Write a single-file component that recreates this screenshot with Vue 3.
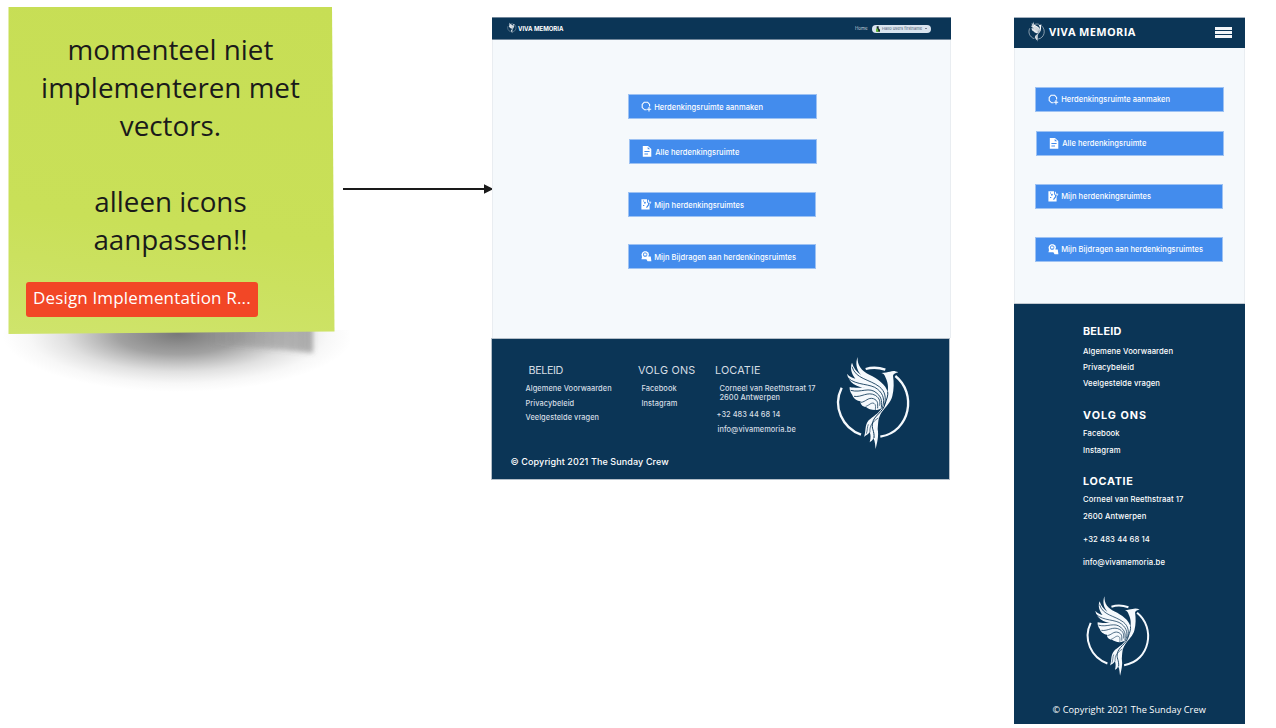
<script setup>
import { h } from 'vue'

const actions = [
  { icon: 'add', label: 'Herdenkingsruimte aanmaken' },
  { icon: 'file', label: 'Alle herdenkingsruimte' },
  { icon: 'edit', label: 'Mijn herdenkingsruimtes' },
  { icon: 'chat', label: 'Mijn Bijdragen aan herdenkingsruimtes' },
]

const policy = ['Algemene Voorwaarden', 'Privacybeleid', 'Veelgestelde vragen']
const social = ['Facebook', 'Instagram']
const place = ['Corneel van Reethstraat 17', '2600 Antwerpen', '+32 483 44 68 14', 'info@vivamemoria.be']

const line = (d, w = 1) => h('path', { d, fill: 'none', stroke: 'currentColor', 'stroke-width': w })
const solid = (d) => h('path', { d, fill: 'currentColor', 'fill-rule': 'evenodd' })
const groove = (d, w = 3) => h('path', { d, fill: 'none', stroke: '#0b3556', 'stroke-width': w })

const glyphs = {
  add: () => [line('M5.6 8.8H3.6L1.2 6.6V3.4L3.2 1.2H6.6L8.6 3.4V5.4', 1.1), line('M8 6V10.4M5.8 8.2H10.2', 1.1)],
  file: () => [solid('M.8 0H6L9.3 3V10.8H.8ZM2.4 4.9V5.9H7.6V4.9ZM2.4 7.5V8.5H6V7.5ZM5.7 .9V3.3H8.2Z')],
  edit: () => [
    solid('M.4 .3H6V3.2L7 4.2V5.4L5.2 8 5.4 8.9 6.4 8.6 8.6 5.4V10.4H.4ZM2 1.5V2.6H3V1.5ZM4 2.4L2.8 3.8 3.9 4.9 5 3.8ZM2 6V7H3.3V6Z'),
    line('M7.4 .8V3.2H10.2M9.7 4L8.2 5.4', 1),
  ],
  chat: () => [
    solid('M1.5 1.3L3.2 .2H5.4L7.4 1.5 8 3.6 7.3 5.4H9.8L10.4 10.2H6.6L5.4 8.3H.4L1 6.3 .5 3.3ZM2.2 2.5V4.7L3.2 5.7H5.3L6.3 4.2V2.6L5 1.5H3.2ZM3 2.5H5.5V4.6H3Z'),
    solid('M3.8 3.1H4.7V4H3.8Z'),
  ],
}

const Icon = (props) => h('svg', { viewBox: '0 0 10.6 10.6' }, glyphs[props.name]())
Icon.props = ['name']

const Phoenix = () =>
  h('svg', { viewBox: '0 0 300 330' }, [
    line('M50 128C22 185 52 249 108 269', 7),
    line('M211 93C276 144 257 260 166 275', 7),
    line('M122 72C142 66 164 68 181 74', 7),
    solid('M98 36C96 61 110 78 133 89C158 101 183 119 188 141C192 117 184 104 181 96C179 89 175 86 169 84C180 83 188 81 195 80C204 76 212 78 220 82C212 84 206 86 204 92C207 111 207 133 202 153C197 174 181 186 170 202C158 220 160 236 158 252C162 274 156 294 152 312C150 302 151 289 145 279C143 287 138 289 134 292C138 278 137 268 134 261C128 271 121 271 117 276C124 260 118 241 131 226C144 213 160 207 171 188C158 200 133 195 123 186C111 186 105 175 107 169C93 167 84 158 82 150C76 143 73 133 74 126C89 130 109 127 123 129C95 127 70 112 66 86C73 95 82 98 91 101C80 86 74 69 81 53C85 68 94 79 108 90C95 75 90 55 98 36Z'),
    groove('M81 65C92 102 132 102 163 125C181 139 184 159 178 180', 2.6),
    groove('M69 99C94 122 137 115 157 132C177 148 180 168 171 191', 2.6),
    groove('M77 136C108 145 133 123 156 145C173 159 170 175 169 188', 2.6),
    groove('M87 154C110 158 127 138 151 151C165 160 166 171 164 182', 2.5),
    groove('M108 172C122 171 129 156 145 161C160 167 158 175 158 190', 2.5),
    groove('M122 184C132 182 138 171 147 175C154 179 151 188 151 195', 2),
    groove('M188 140C190 150 186 160 180 177C175 201 145 213 143 234C138 250 149 257 147 279', 3),
    groove('M160 219C141 231 133 243 135 262M130 238C126 247 128 255 124 266', 2),
  ])
</script>

<template>
  <main class="board">
    <section class="note">
      <svg class="shade" viewBox="0 0 350 70">
        <defs>
          <filter id="crisp" x="-20%" y="-100%" width="140%" height="300%"><feGaussianBlur stdDeviation="2.500" /></filter>
          <radialGradient id="pool">
            <stop offset="0" stop-color="#444" stop-opacity=".72" />
            <stop offset=".35" stop-color="#444" stop-opacity=".5" />
            <stop offset=".65" stop-color="#555" stop-opacity=".18" />
            <stop offset=".85" stop-color="#666" stop-opacity=".05" />
            <stop offset="1" stop-color="#666" stop-opacity="0" />
          </radialGradient>
          <linearGradient id="edge">
            <stop offset="0" stop-color="#555" stop-opacity="0" />
            <stop offset="1" stop-color="#555" stop-opacity=".45" />
          </linearGradient>
        </defs>
        <ellipse cx="178" cy="4" rx="176" ry="58" fill="url(#pool)" />
        <path d="M210 -6H313V23Q260 17 210 15Z" fill="url(#edge)" filter="url(#crisp)" />
      </svg>
      <div class="paper">
        <p>momenteel niet<br />implementeren met<br />vectors.<br /><br />alleen icons<br />aanpassen!!</p>
        <span class="tag">Design Implementation R...</span>
      </div>
    </section>

    <svg class="arrow" viewBox="0 0 152 12">
      <path d="M0 6H143" stroke="#1a1a1a" stroke-width="2.2" />
      <path d="M141 1.2L150.500 6L141 10.800Z" fill="#1a1a1a" />
    </svg>

    <section class="desktop">
      <header>
        <Phoenix class="mark" />
        <b>VIVA MEMORIA</b>
        <span class="home">Home</span>
        <span class="user">
          <svg viewBox="0 0 6 8"><path d="M1 0H4V3L6 5V8H1Z" fill="#172b2b" /><path d="M0 4L2 3 4 8H0Z" fill="#65bd36" /></svg>
          <span>Hallo users firstname</span><i></i>
        </span>
      </header>
      <nav class="actions">
        <a v-for="a in actions" :key="a.icon" :class="a.icon"><Icon :name="a.icon" /><span>{{ a.label }}</span></a>
      </nav>
      <footer>
        <div class="cols">
          <div class="policy"><h2>BELEID</h2><p v-for="t in policy" :key="t">{{ t }}</p></div>
          <div class="social"><h2>VOLG ONS</h2><p v-for="t in social" :key="t">{{ t }}</p></div>
          <div class="place"><h2>LOCATIE</h2><p v-for="t in place" :key="t">{{ t }}</p></div>
          <Phoenix class="bird" />
        </div>
        <small>© Copyright 2021 The Sunday Crew</small>
      </footer>
    </section>

    <section class="mobile">
      <header>
        <Phoenix class="mark" />
        <b>VIVA MEMORIA</b>
        <span class="burger"><i></i><i></i><i></i></span>
      </header>
      <nav class="actions">
        <a v-for="a in actions" :key="a.icon" :class="a.icon"><Icon :name="a.icon" /><span>{{ a.label }}</span></a>
      </nav>
      <footer>
        <div class="policy"><h2>BELEID</h2><p v-for="t in policy" :key="t">{{ t }}</p></div>
        <div class="social"><h2>VOLG ONS</h2><p v-for="t in social" :key="t">{{ t }}</p></div>
        <div class="place"><h2>LOCATIE</h2><p v-for="t in place" :key="t">{{ t }}</p></div>
        <Phoenix class="bird" />
        <small>© Copyright 2021 The Sunday Crew</small>
      </footer>
    </section>
  </main>
</template>

<style>
body { margin: 0; background: #fff; overflow: hidden; }
</style>

<style scoped>
.board { position: relative; width: 1276px; height: 728px; overflow: hidden; background: #fff; font-family: Inter, "Liberation Sans", sans-serif; }
.board * { box-sizing: border-box; }
p, h2 { margin: 0; white-space: nowrap; }
svg { display: block; flex: none; overflow: visible; }

.note { position: absolute; left: 8px; top: 7px; width: 327px; height: 328px; }
.shade { position: absolute; left: -8px; top: 323px; width: 350px; height: 70px; overflow: hidden; }
.paper { position: relative; height: 328px; padding: 23px 2px 0 0; background: linear-gradient(187deg, #c7de55 0%, #c9e058 65%, #cbe15f 78%, #cfe46c 100%); clip-path: polygon(.5px 0, 324px 0, 326.5px 324.500px, .5px 327px); }
.paper p { font: 27.800px/38px "Open Sans", sans-serif; color: #1a1a1a; text-align: center; }
.tag { display: block; width: 232px; height: 35px; margin: 24px 0 0 18px; padding-left: 7px; border-radius: 3px; background: #f24726; color: #fff; font: 17px/32px "Open Sans", sans-serif; letter-spacing: .16px; white-space: nowrap; }

.arrow { position: absolute; left: 343px; top: 183px; width: 152px; height: 12px; }

.desktop { position: absolute; left: 491px; top: 17px; width: 460px; height: 463px; }
.desktop header { display: flex; align-items: center; width: 459px; height: 23px; margin-left: 1px; padding-left: 14px; background: #0b3556; border: 1px solid #71869a; border-width: 1px 0; color: #fff; }
.desktop .mark { width: 12px; height: 13px; color: #fff; margin-top: -2px; }
.desktop header b { width: 46px; font-size: 6px; letter-spacing: -.02px; white-space: nowrap; }
.home { margin-left: 291px; width: 17px; font-size: 4.500px; color: #c5d0da; }
.user { display: flex; align-items: center; gap: 2px; width: 59px; height: 8px; padding-left: 4px; border-radius: 4px; background: #dae4ef; color: #4b5e70; font-size: 4px; white-space: nowrap; }
.user svg { width: 4px; height: 6px; }
.user i { margin: 1px 0 0 1px; border: 1px solid transparent; border-top-color: #223; }
.desktop .actions { height: 298px; margin: 0 0 0 1px; padding: 54px 0 0 135px; }

.actions { display: flex; flex-direction: column; background: #f5f9fc; border: 1px solid #e9edf1; border-width: 0 1px; }
.actions a { display: flex; align-items: center; width: 189px; height: 25px; padding-left: 12px; background: #438ced; border: 1px solid #9dc2f3; color: #fff; font-size: 7.500px; font-weight: 500; letter-spacing: .06px; white-space: nowrap; }
.actions a svg { width: 10.600px; height: 10.600px; margin-right: 2.600px; }
.actions .file { margin: 20px 0 0 1px; width: 188px; }
.actions .edit { margin-top: 28px; width: 188px; }
.actions .chat { margin-top: 27px; width: 188px; }
.actions a span { padding-top: 1px; }

.desktop footer { width: 459px; height: 142px; padding-top: 25px; background: #0b3556; border: 1px solid #b3bec8; color: #d5dde4; }
.cols { display: flex; height: 91px; }
.desktop h2 { height: 14px; font-size: 10.800px; line-height: 14px; font-weight: 400; }
.desktop p { font-size: 7.400px; line-height: 10px; font-weight: 500; letter-spacing: .06px; }
.desktop .policy { width: 112px; padding-left: 33.500px; }
.desktop .policy h2 { padding-left: 3px; letter-spacing: -.4px; }
.desktop .policy p { margin-top: 4px; }
.desktop .policy h2 + p { margin-top: 6px; }
.desktop .policy h2 + p + p { margin-top: 5px; }
.desktop .social { width: 77px; padding-left: 34px; }
.desktop .social h2 { letter-spacing: .25px; }
.desktop .social p { margin: 5px 0 0 3.500px; }
.desktop .social h2 + p { margin-top: 6px; }
.desktop .place { width: 144px; padding-left: 34px; }
.desktop .place h2 { letter-spacing: .15px; }
.desktop .place p { margin-left: 4.500px; line-height: 9px; }
.desktop .place h2 + p { margin-top: 6px; }
.desktop .place p:nth-child(4) { margin: 8px 0 0 1.500px; letter-spacing: .05px; }
.desktop .place p:nth-child(5) { margin: 6px 0 0 2.500px; }
.desktop .bird { width: 100px; height: 110px; color: #f5f9fd; margin-top: -19px; }
.desktop small { display: block; padding-left: 18.500px; font-size: 9px; line-height: 14px; font-weight: 500; letter-spacing: .11px; color: #fff; }

.mobile { position: absolute; left: 1014px; top: 17px; width: 231px; height: 707px; }
.mobile header { display: flex; align-items: center; height: 31px; padding-left: 12px; background: #0b3556; border-top: 1px solid #a4b1bf; color: #fff; }
.mobile .mark { width: 22px; height: 24px; margin: -4px 1px 0 0; }
.mobile header b { width: 88px; margin-top: -3px; font: bold 11px "Open Sans", sans-serif; letter-spacing: .34px; white-space: nowrap; }
.burger { display: grid; gap: 1px; margin: -1px 0 0 78px; width: 17px; }
.burger i { height: 3px; background: #f2f5f8; }
.mobile .actions { height: 255px; padding: 39px 0 0 20px; }
.mobile .actions .file { margin-top: 19px; }
.mobile .actions .chat { margin-top: 28px; }
.mobile .actions a span { padding-top: 0; }
.mobile footer { height: 421px; padding-top: 21px; background: #0b3556; border-top: 1px solid #c1c9d1; color: #fff; }
.mobile footer div { padding-left: 69px; }
.mobile h2 { font-size: 10.800px; line-height: 14px; font-weight: 700; letter-spacing: .7px; }
.mobile .policy h2 { letter-spacing: .2px; }
.mobile .social h2 { letter-spacing: 1px; }
.mobile p { font-size: 7.700px; line-height: 10px; font-weight: 500; letter-spacing: .09px; }
.mobile .policy p { margin-top: 6px; }
.mobile .policy h2 + p { margin-top: 8px; }
.mobile .social { margin-top: 20px; }
.mobile .social p { margin-top: 7px; }
.mobile .social h2 + p { margin-top: 6px; }
.mobile .place { margin-top: 19px; }
.mobile .place p { margin-top: 7px; }
.mobile .place h2 + p { margin-top: 6px; }
.mobile .place p:nth-child(n + 4) { margin-top: 13px; }
.mobile .bird { width: 87px; height: 95px; margin: 18px 0 0 62px; color: #f5f9fd; }
.mobile small { display: block; margin-top: 22px; padding-left: 38.500px; font: 9.200px/14px "Open Sans", sans-serif; letter-spacing: .06px; white-space: nowrap; }
</style>
